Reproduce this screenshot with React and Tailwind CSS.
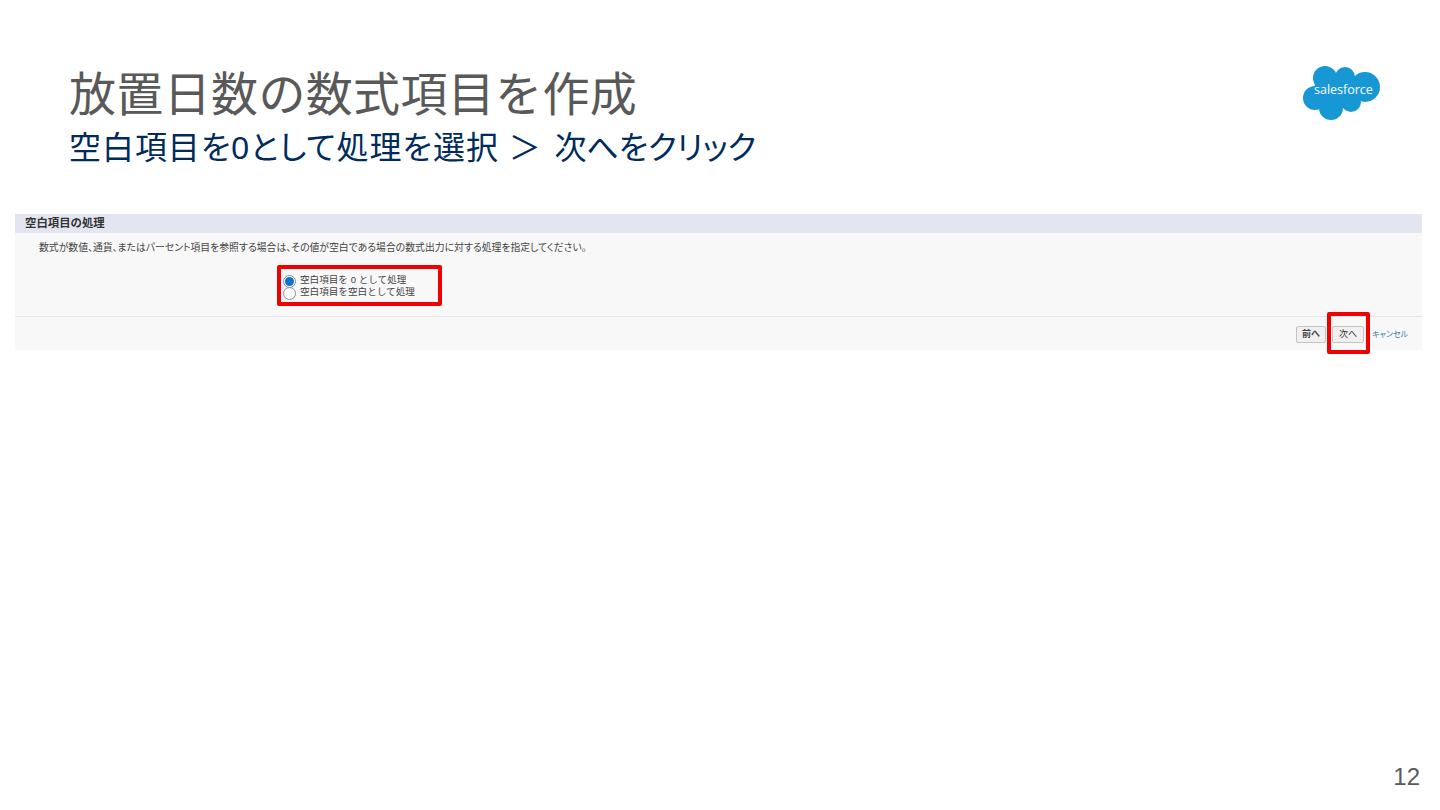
const JP = "font-['Liberation_Sans','Noto_Sans_CJK_JP',sans-serif]"
const PALT = "[font-feature-settings:'palt']"

function SalesforceLogo() {
  return (
    <div className="relative w-[77px] h-[54px]">
      <svg width="77" height="54" viewBox="0 0 77 54" className="block">
        <g fill="#1798d5">
          <circle cx="22" cy="12" r="12" />
          <circle cx="42" cy="11" r="10" />
          <circle cx="62" cy="21" r="15" />
          <circle cx="12" cy="32" r="12" />
          <circle cx="28" cy="42" r="12" />
          <circle cx="48" cy="36" r="10" />
          <ellipse cx="36" cy="25" rx="26" ry="16" />
        </g>
      </svg>
      <span className="absolute left-[11px] top-[15px] text-[12.5px] leading-[18px] font-medium text-white font-['Open_Sans',sans-serif]">
        salesforce
      </span>
    </div>
  )
}

function Radio({ checked, label }) {
  return (
    <div className="flex items-center h-[12px]">
      <span className="flex items-center justify-center w-[13px] h-[13px] rounded-full bg-white border border-[#8a8f96] shrink-0">
        {checked && <span className="block w-[9px] h-[9px] rounded-full bg-[#0f72c8]" />}
      </span>
      <span className="ml-[4px] mb-[3px] text-[9.6px] leading-[12px] text-[#444]">{label}</span>
    </div>
  )
}

export default function App() {
  return (
    <div className={`relative w-[1440px] h-[810px] overflow-hidden bg-white ${JP}`}>
      <div className="flex justify-between pl-[69px] pr-[60px] pt-[66px]">
        <div>
          <h1 className="text-[47px] leading-[58px] tracking-[0.35px] font-normal text-[#595959] whitespace-nowrap">放置日数の数式項目を作成</h1>
          <p className={`text-[32px] leading-[44px] text-[#002b5c] whitespace-nowrap mt-[2px] ${PALT}`}>
            <span className="tracking-[0.95px]">空白項目を0として処理を選択 ＞ </span>
            <span className="ml-[3px] tracking-[-0.2px]">次へをクリック</span>
          </p>
        </div>
        <SalesforceLogo />
      </div>

      <section className="mt-[44px] mx-[15px] w-[1407px] bg-[#f8f8f8]">
        <div className="mt-[2px] h-[19px] bg-[#e3e6f0] pl-[10px] text-[11.4px] leading-[19px] font-bold text-[#333]">空白項目の処理</div>
        <p className={`pl-[24px] pt-[8px] text-[9.85px] leading-[14px] text-[#444] whitespace-nowrap ${PALT}`}>
          数式が数値、通貨、またはパーセント項目を参照する場合は、その値が空白である場合の数式出力に対する処理を指定してください。
        </p>
        <div className="pl-[268px] pt-[20px] h-[61px]">
          <Radio checked label="空白項目を 0 として処理" />
          <Radio label="空白項目を空白として処理" />
        </div>
        <div className="flex items-center justify-end h-[34px] border-t border-[#e6e6e6] pr-[15px] pt-[2px]">
          <button className={`h-[17px] w-[30px] rounded-[2px] border border-[#c4c4c4] bg-[#f0f0f0] text-[9px] font-bold text-[#444] ${PALT}`}>前へ</button>
          <button className={`ml-[6px] h-[17px] w-[32px] rounded-[2px] border border-[#c4c4c4] bg-[#f0f0f0] text-[9px] text-[#333] ${PALT}`}>次へ</button>
          <a className={`ml-[8px] w-[35px] whitespace-nowrap text-[8px] text-[#3a78a8] ${PALT}`}>キャンセル</a>
        </div>
      </section>

      {/* red highlight boxes */}
      <div className="absolute left-[277px] top-[265px] w-[165px] h-[41px] border-[4px] border-[#f00000] rounded-[2px]" />
      <div className="absolute left-[1327px] top-[312px] w-[43px] h-[42px] border-[4px] border-[#f00000] rounded-[2px]" />

      <div className="absolute right-[20px] top-[762px] text-[24px] leading-[30px] text-[#595959]">12</div>
    </div>
  )
}
